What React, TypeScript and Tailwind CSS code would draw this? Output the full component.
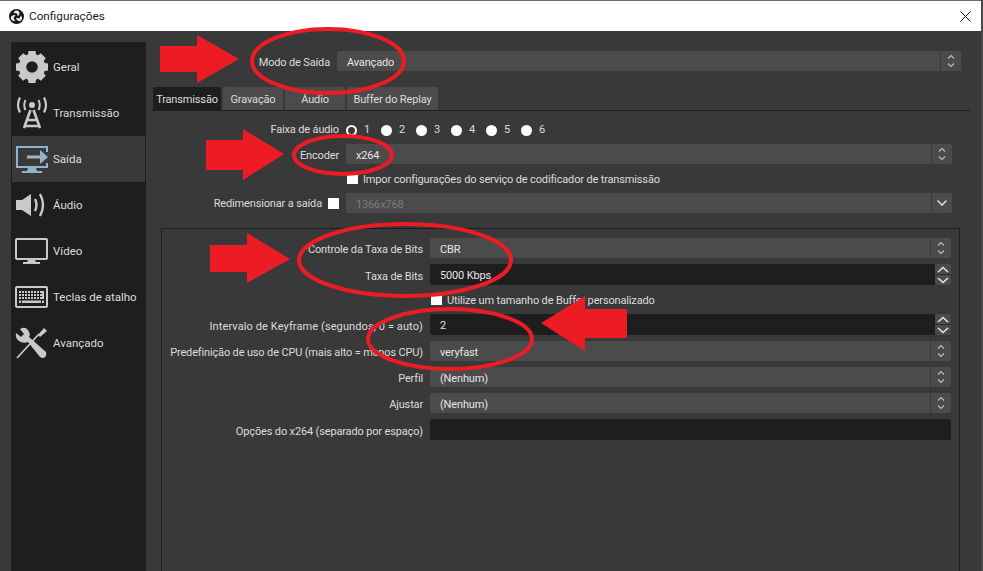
const FONT = "font-['Roboto','Open_Sans',sans-serif]";

function Chevrons() {
  return (
    <svg width="10" height="16" viewBox="0 0 10 16" fill="none" stroke="#bdbdbd" strokeWidth="1.2">
      <path d="M2 5.5 5 2.5 8 5.5" />
      <path d="M2 10.5 5 13.5 8 10.5" />
    </svg>
  );
}

function Combo({ value, disabled, single }: { value: string; disabled?: boolean; single?: boolean }) {
  return (
    <div className="flex flex-1 h-5 rounded-[2px] bg-[#4c4b4c]">
      <div className={`flex flex-1 items-center pl-[10px] pt-[3px] ${disabled ? "text-[#7c7b7c]" : "text-[#e6e6e6]"}`}>{value}</div>
      <div className="flex w-[21px] items-center justify-center border-l border-[#3a393a]">
        {single ? (
          <svg width="12" height="8" viewBox="0 0 12 8" fill="none" stroke="#d8d8d8" strokeWidth="1.6">
            <path d="M1.5 1.5 6 6 10.5 1.5" />
          </svg>
        ) : (
          <Chevrons />
        )}
      </div>
    </div>
  );
}

function Spin({ value }: { value: string }) {
  return (
    <div className="flex flex-1 h-[21px]">
      <div className="flex flex-1 items-center rounded-l-[2px] bg-[#1f1e1f] pl-[10px] pt-[3px] text-[#e6e6e6]">{value}</div>
      <div className="flex w-4 flex-col">
        <div className="flex h-[11px] items-center justify-center rounded-t-[2px] border-b border-[#2a2a2a] bg-[#4c4b4c]">
          <svg width="12" height="7" viewBox="0 0 12 7" fill="none" stroke="#e4e4e4" strokeWidth="1.6">
            <path d="M1 6 6 1.5 11 6" />
          </svg>
        </div>
        <div className="flex h-[10px] items-center justify-center rounded-b-[2px] bg-[#4c4b4c]">
          <svg width="12" height="7" viewBox="0 0 12 7" fill="none" stroke="#e4e4e4" strokeWidth="1.6">
            <path d="M1 1 6 5.5 11 1" />
          </svg>
        </div>
      </div>
    </div>
  );
}

function Check() {
  return <span className="block h-[11px] w-[11px] shrink-0 bg-white" />;
}

function Row({ label, labelW, children, className = "" }: { label: string; labelW: string; children: React.ReactNode; className?: string }) {
  return (
    <div className={`flex items-center ${className}`}>
      <div className={`${labelW} shrink-0 whitespace-nowrap pr-[7px] pt-[4px] text-right text-[#dcdcdc]`}>{label}</div>
      {children}
    </div>
  );
}

function Radio({ n, on }: { n: number; on?: boolean }) {
  return (
    <div className="flex w-[35px] items-center gap-[7px]">
      {on ? (
        <span className="block h-[11px] w-[11px] rounded-full border-2 border-white" />
      ) : (
        <span className="block h-[11px] w-[11px] rounded-full bg-white" />
      )}
      <span className="text-[#dcdcdc]">{n}</span>
    </div>
  );
}

const c = "#c9c9c9";

const GearIcon = (
  <svg width="34" height="34" viewBox="0 0 34 34">
    <g fill={c}>
      {[0, 45, 90, 135, 180, 225, 270, 315].map((a) => (
        <path key={a} d="M13.5 1h7l1 7h-9z" transform={`rotate(${a} 17 17)`} />
      ))}
    </g>
    <circle cx="17" cy="17" r="9.5" fill="none" stroke={c} strokeWidth="7.5" />
  </svg>
);

const AntennaIcon = (
  <svg width="34" height="32" viewBox="0 0 34 32" fill="none" stroke={c}>
    <circle cx="17" cy="8" r="3" fill={c} stroke="none" />
    <path d="M10.5 3Q8 8 10.5 13M23.5 3Q26 8 23.5 13" strokeWidth="2" />
    <path d="M5 0.5Q1 8 5 15.5M29 0.5Q33 8 29 15.5" strokeWidth="2.2" />
    <path d="M15.5 13 9 31M18.5 13l6.5 18M12.5 23h9M10 29h14" strokeWidth="2.6" />
  </svg>
);

const OutputIcon = (
  <svg width="34" height="28" viewBox="0 0 34 28">
    <path d="M32 7V2H2v20h30v-4" fill="none" stroke="#8fb4d0" strokeWidth="2" />
    <path d="M13 23h8l1 3h5v2H7v-2h5z" fill="#8fb4d0" />
    <rect x="12" y="10.5" width="13" height="3" fill="#a3b3c0" />
    <path d="M25 5l8 7-8 7z" fill="#8fb4d0" />
  </svg>
);

const SpeakerIcon = (
  <svg width="32" height="24" viewBox="0 0 32 24" fill="none">
    <path d="M1 7h6l9-6v22l-9-6H1z" fill={c} />
    <path d="M20 6q3 6 0 12M25 1q6 11 0 22" stroke={c} strokeWidth="2.4" />
  </svg>
);

const MonitorIcon = (
  <svg width="33" height="26" viewBox="0 0 33 26">
    <rect x="1" y="1" width="31" height="20" rx="1" fill="none" stroke={c} strokeWidth="2" />
    <path d="M13 22h7l1 2h4v2H8v-2h4z" fill={c} />
  </svg>
);

const KeyboardIcon = (
  <svg width="33" height="22" viewBox="0 0 33 22">
    <rect x="1" y="1" width="31" height="20" rx="1" fill="none" stroke={c} strokeWidth="2" />
    <g fill={c}>
      {[4, 7, 10, 13, 16, 19, 22, 25].flatMap((x) =>
        [5, 8, 11].map((y) => <rect key={`${x}-${y}`} x={x} y={y} width="2" height="2" />)
      )}
      <rect x="27" y="5" width="2" height="8" />
      <rect x="7" y="14.5" width="19" height="2.5" />
      <rect x="4" y="14.5" width="2" height="2.5" />
      <rect x="27" y="14.5" width="2" height="2.5" />
    </g>
  </svg>
);

const ToolsIcon = (
  <svg width="33" height="33" viewBox="0 0 33 33" fill="none">
    <path d="M2 31 24 7" stroke={c} strokeWidth="1.8" />
    <path d="M23 8 29 1l3 3-7 6z" fill={c} />
    <path d="M1 6l5 4 3-3-4-5q5-3 8 1t1 7l17 15q1 3-1 5t-5 0L13 15q-5 2-9-1T1 6z" fill={c} />
  </svg>
);

const navItems = [
  { name: "Geral", icon: GearIcon },
  { name: "Transmissão", icon: AntennaIcon },
  { name: "Saída", icon: OutputIcon, active: true },
  { name: "Áudio", icon: SpeakerIcon },
  { name: "Vídeo", icon: MonitorIcon },
  { name: "Teclas de atalho", icon: KeyboardIcon },
  { name: "Avançado", icon: ToolsIcon },
];

const tabs = [
  { name: "Transmissão", w: "w-[68px]", active: true },
  { name: "Gravação", w: "w-[60px]" },
  { name: "Áudio", w: "w-[60px]" },
  { name: "Buffer do Replay", w: "w-[91px]" },
];

export default function App() {
  return (
    <div className={`relative h-[571px] w-[983px] overflow-hidden bg-[#4a494a] text-[11px] leading-[14px] tracking-[-0.15px] ${FONT}`}>
      <div className="mr-[2px] flex h-[31px] items-center border-t border-[#6a6a6a] bg-white">
        <svg className="ml-[9px]" width="15" height="15" viewBox="0 0 30 30">
          <circle cx="15" cy="15" r="15" fill="#171717" />
          {[0, 120, 240].map((a) => (
            <path
              key={a}
              d="M15 3a6 6 0 0 1 6 6 6 6 0 0 1-4 5.500a5 5 0 0 0-5-6.500 4 4 0 0 0-2.500 1A6 6 0 0 1 15 3z"
              fill="#e8e8e8"
              transform={`rotate(${a} 15 15)`}
            />
          ))}
        </svg>
        <span className="ml-[5px] text-[11.75px] tracking-normal text-[#1a1a1a]">Configurações</span>
        <svg className="ml-auto mr-[10px]" width="11" height="11" viewBox="0 0 11 11" stroke="#111" strokeWidth="1">
          <path d="M0.5 0.5l10 10M10.5 0.5l-10 10" />
        </svg>
      </div>

      <div className="mr-[2px] flex h-[540px] bg-[#3a393a] pl-[11px] pt-[11px]">
        {/* sidebar */}
        <div className="w-[135px] bg-[#1f1e1f] pt-[2px]">
          {navItems.map((item) => (
            <div
              key={item.name}
              className={`ml-px flex h-[46px] w-[133px] items-center text-[11.5px] tracking-normal ${item.active ? "bg-[#3a393a]" : ""}`}
            >
              <div className="flex w-[41px] shrink-0 items-center pl-[3px]">{item.icon}</div>
              <span className="text-[#dcdcdc]">{item.name}</span>
            </div>
          ))}
        </div>

        {/* main */}
        <div className="flex-1 pl-[6px] pt-[9px]">
          <Row label="Modo de Saída" labelW="w-[185px]" className="pr-[20px]">
            <Combo value="Avançado" />
          </Row>

          <div className="mr-[11px] mt-4 flex h-[24px] gap-[2px] border-b border-[#1f1e1f] pl-px">
            {tabs.map((t) => (
              <div
                key={t.name}
                className={`flex h-[23px] ${t.w} items-center justify-center rounded-t-[2px] pt-[3px] text-[#dcdcdc] ${t.active ? "bg-[#1f1e1f]" : "bg-[#4c4b4c]"}`}
              >
                {t.name}
              </div>
            ))}
          </div>

          <div className="flex h-[33px] items-start pt-[11px]">
            <div className="w-[194px] shrink-0 whitespace-nowrap pr-[7px] pt-px text-right text-[#dcdcdc]">Faixa de áudio</div>
            <div className="flex h-4 items-center">
              {[1, 2, 3, 4, 5, 6].map((n) => (
                <Radio key={n} n={n} on={n === 1} />
              ))}
            </div>
          </div>

          <Row label="Encoder" labelW="w-[194px]" className="pr-[29px]">
            <Combo value="x264" />
          </Row>
          <div className="flex h-[29px] items-center gap-[5px] pl-[195px] text-[#dcdcdc]">
            <Check />
            <span className="pt-[2px]">Impor configurações do serviço de codificador de transmissão</span>
          </div>
          <div className="flex items-center pr-[29px]">
            <div className="flex w-[194px] shrink-0 items-center justify-end gap-[6px] whitespace-nowrap pr-[7px] text-[#dcdcdc]">
              <span className="pt-[2px]">Redimensionar a saída</span> <Check />
            </div>
            <Combo value="1366x768" disabled single />
          </div>

          {/* group box */}
          <div className="ml-[9px] mr-[21px] mt-[15px] h-[400px] border border-[#1f1e1f] pr-[8px] pt-[9px]">
            <div className="flex flex-col">
              <Row label="Controle da Taxa de Bits" labelW="w-[268px]">
                <Combo value="CBR" />
              </Row>
              <Row label="Taxa de Bits" labelW="w-[268px]" className="mt-[6px]">
                <Spin value="5000 Kbps" />
              </Row>
              <div className="flex h-[29px] items-center gap-[5px] pl-[269px] text-[#dcdcdc]">
                <Check />
                <span className="pt-[2px]">Utilize um tamanho de Buffer personalizado</span>
              </div>
              <Row label="Intervalo de Keyframe (segundos, 0 = auto)" labelW="w-[268px]" className="tracking-[0.1px]">
                <Spin value="2" />
              </Row>
              <Row label="Predefinição de uso de CPU (mais alto = menos CPU)" labelW="w-[268px]" className="mt-[6px]">
                <Combo value="veryfast" />
              </Row>
              <Row label="Perfil" labelW="w-[268px]" className="mt-[6px]">
                <Combo value="(Nenhum)" />
              </Row>
              <Row label="Ajustar" labelW="w-[268px]" className="mt-[6px]">
                <Combo value="(Nenhum)" />
              </Row>
              <Row label="Opções do x264 (separado por espaço)" labelW="w-[268px]" className="mt-[6px]">
                <div className="h-[21px] flex-1 rounded-[2px] bg-[#1f1e1f]" />
              </Row>
            </div>
          </div>
        </div>
      </div>

      {/* red annotations drawn over the screenshot */}
      <svg className="pointer-events-none absolute left-0 top-0" width="983" height="571" fill="none">
        <g fill="#ed1c24">
          <path d="M160 46H197V35L239 59 197 83V72H160Z" />
          <path d="M206 140H243V129L284 154 243 180V170H206Z" />
          <path d="M210 245H247V233L290 259 247 283V272H210Z" />
          <path d="M627 309H585V296L541 323 585 351V338H627Z" />
        </g>
        <g stroke="#ed1c24" strokeWidth="4">
          <ellipse cx="328" cy="61" rx="76" ry="32" />
          <ellipse cx="343" cy="155" rx="49" ry="19" />
          <ellipse cx="405" cy="260" rx="106" ry="36" />
          <ellipse cx="450" cy="339" rx="82" ry="30" />
        </g>
      </svg>
    </div>
  );
}
